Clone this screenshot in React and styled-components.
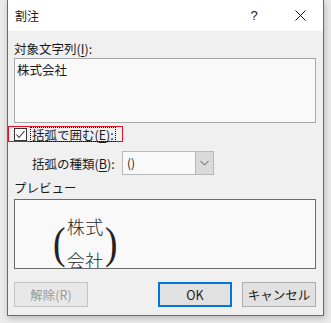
import React from "react";
import styled, { createGlobalStyle } from "styled-components";

const GlobalStyle = createGlobalStyle`
    html, body {
        margin: 0;
        padding: 0;
        background: #ebebeb;
        font-family: "Noto Sans CJK JP", "Noto Sans", sans-serif;
        font-size: 12px;
        color: #1a1a1a;
    }
`;

const Page = styled.div`
    padding-left: 7px;
    height: 323px;
    overflow: hidden;
`;

const Dialog = styled.div`
    width: 315px;
    height: 315px;
    border: 1px solid #6a6a6a;
    border-top: none;
    background: #f0f0f0;
    box-shadow: 1px 2px 6px rgba(0, 0, 0, 0.22);
    display: flex;
    flex-direction: column;
`;

const TitleBar = styled.div`
    height: 31px;
    background: #ffffff;
    display: flex;
    align-items: center;
    padding-left: 7px;
`;

const Title = styled.div`
    flex: 1;
    font-size: 12px;
    line-height: 16px;
`;

const TitleButton = styled.div`
    width: 46px;
    height: 31px;
    display: flex;
    align-items: center;
    justify-content: center;
    font-family: "Liberation Sans", sans-serif;
    font-size: 13px;
`;

const Body = styled.div`
    flex: 1;
    padding: 0 7px 0 6px;
    display: flex;
    flex-direction: column;
`;

const Label = styled.div`
    line-height: 17px;
    height: 17px;
    margin-top: ${(p) => p.$top}px;
    white-space: nowrap;
    font-size: 12.5px;
`;

const Key = styled.span`
    text-decoration: underline;
    text-underline-offset: 2px;
`;

const TextBox = styled.div`
    margin-top: 1px;
    border: 1px solid #a8a8a8;
    background: #f9f9f9;
    padding: 3px 2px;
    box-sizing: border-box;
    height: 65px;
    line-height: 16px;
    font-size: 12.5px;
`;

const CheckRow = styled.div`
    margin: 3px 0 0 -6px;
    width: 115px;
    height: 16px;
    border: 1px solid #e81123;
    box-sizing: border-box;
    display: flex;
    align-items: center;
    padding-left: 5px;
    gap: 4px;
`;

const CheckBox = styled.div`
    width: 13px;
    height: 13px;
    border: 1px solid #333333;
    box-sizing: border-box;
    background: #ffffff;
    display: flex;
    align-items: center;
    justify-content: center;
`;

const FocusLabel = styled.span`
    outline: 1px dotted #000;
    line-height: 13px;
    padding: 0 1px;
    white-space: nowrap;
    font-size: 12.5px;
`;

const SelectRow = styled.div`
    margin-top: 9px;
    display: flex;
    align-items: center;
    padding-left: 18px;
    height: 24px;
`;

const SelectLabel = styled.div`
    width: 90px;
    white-space: nowrap;
    font-size: 12.5px;
`;

const Select = styled.div`
    width: 92px;
    height: 24px;
    box-sizing: border-box;
    border: 1px solid #b9b9b9;
    background: #f9f9f9;
    display: flex;
`;

const SelectValue = styled.div`
    flex: 1;
    padding-left: 4px;
    line-height: 22px;
`;

const SelectButton = styled.div`
    width: 17px;
    background: #dadada;
    border-left: 1px solid #b9b9b9;
    display: flex;
    align-items: center;
    justify-content: center;
`;

const Preview = styled.div`
    margin-top: 3px;
    height: 70px;
    box-sizing: border-box;
    border: 1px solid #6b6b6b;
    background: #f9f9f9;
    overflow: hidden;
    display: flex;
    padding-left: 37px;
`;

const Paren = styled.div`
    font-family: "Liberation Serif", serif;
    font-size: 44px;
    line-height: 40px;
    margin-top: 24px;
    color: #222;
    transform: scaleX(0.85);
`;

const Split = styled.div`
    display: flex;
    flex-direction: column;
    font-size: 18px;
    line-height: 34px;
    margin-top: 9px;
    color: #2a2a2a;
    font-weight: 300;
    letter-spacing: 0.5px;
`;

const ButtonRow = styled.div`
    margin-top: 13px;
    display: flex;
    align-items: center;
`;

const Button = styled.div`
    width: 74px;
    height: 25px;
    box-sizing: border-box;
    display: flex;
    align-items: center;
    justify-content: center;
    background: ${(p) => (p.$disabled ? "#e8e8e8" : "#e1e1e1")};
    border: ${(p) =>
        p.$primary ? "2px solid #0078d7" : p.$disabled ? "1px solid #c4c4c4" : "1px solid #adadad"};
    color: ${(p) => (p.$disabled ? "#9a9a9a" : "#1a1a1a")};
    margin-left: ${(p) => p.$gap || 0}px;
    font-size: 12.5px;
`;

function CloseIcon() {
    return (
        <svg width="11" height="11" viewBox="0 0 11 11">
            <path d="M0.5 0.5 L10.5 10.5 M10.5 0.5 L0.5 10.5" stroke="#111" strokeWidth="1" />
        </svg>
    );
}

function CheckMark() {
    return (
        <svg width="11" height="11" viewBox="0 0 11 11">
            <path d="M1.5 5.5 L4 8.5 L9.5 2" fill="none" stroke="#333" strokeWidth="1.1" />
        </svg>
    );
}

function Chevron() {
    return (
        <svg width="9" height="6" viewBox="0 0 9 6">
            <path d="M0.5 1 L4.5 5 L8.5 1" fill="none" stroke="#555" strokeWidth="1" />
        </svg>
    );
}

export default function App() {
    return (
        <Page>
            <GlobalStyle />
            <Dialog>
                <TitleBar>
                    <Title>割注</Title>
                    <TitleButton>?</TitleButton>
                    <TitleButton>
                        <CloseIcon />
                    </TitleButton>
                </TitleBar>
                <Body>
                    <Label $top={9}>
                        対象文字列(<Key>I</Key>):
                    </Label>
                    <TextBox>株式会社</TextBox>
                    <CheckRow>
                        <CheckBox>
                            <CheckMark />
                        </CheckBox>
                        <FocusLabel>
                            括弧で囲む(<Key>E</Key>):
                        </FocusLabel>
                    </CheckRow>
                    <SelectRow>
                        <SelectLabel>
                            括弧の種類(<Key>B</Key>):
                        </SelectLabel>
                        <Select>
                            <SelectValue>()</SelectValue>
                            <SelectButton>
                                <Chevron />
                            </SelectButton>
                        </Select>
                    </SelectRow>
                    <Label $top={4}>プレビュー</Label>
                    <Preview>
                        <Paren>(</Paren>
                        <Split>
                            <span>株式</span>
                            <span>会社</span>
                        </Split>
                        <Paren>)</Paren>
                    </Preview>
                    <ButtonRow>
                        <Button $disabled>解除(R)</Button>
                        <Button $primary $gap={70}>
                            OK
                        </Button>
                        <Button $gap={10}>キャンセル</Button>
                    </ButtonRow>
                </Body>
            </Dialog>
        </Page>
    );
}
